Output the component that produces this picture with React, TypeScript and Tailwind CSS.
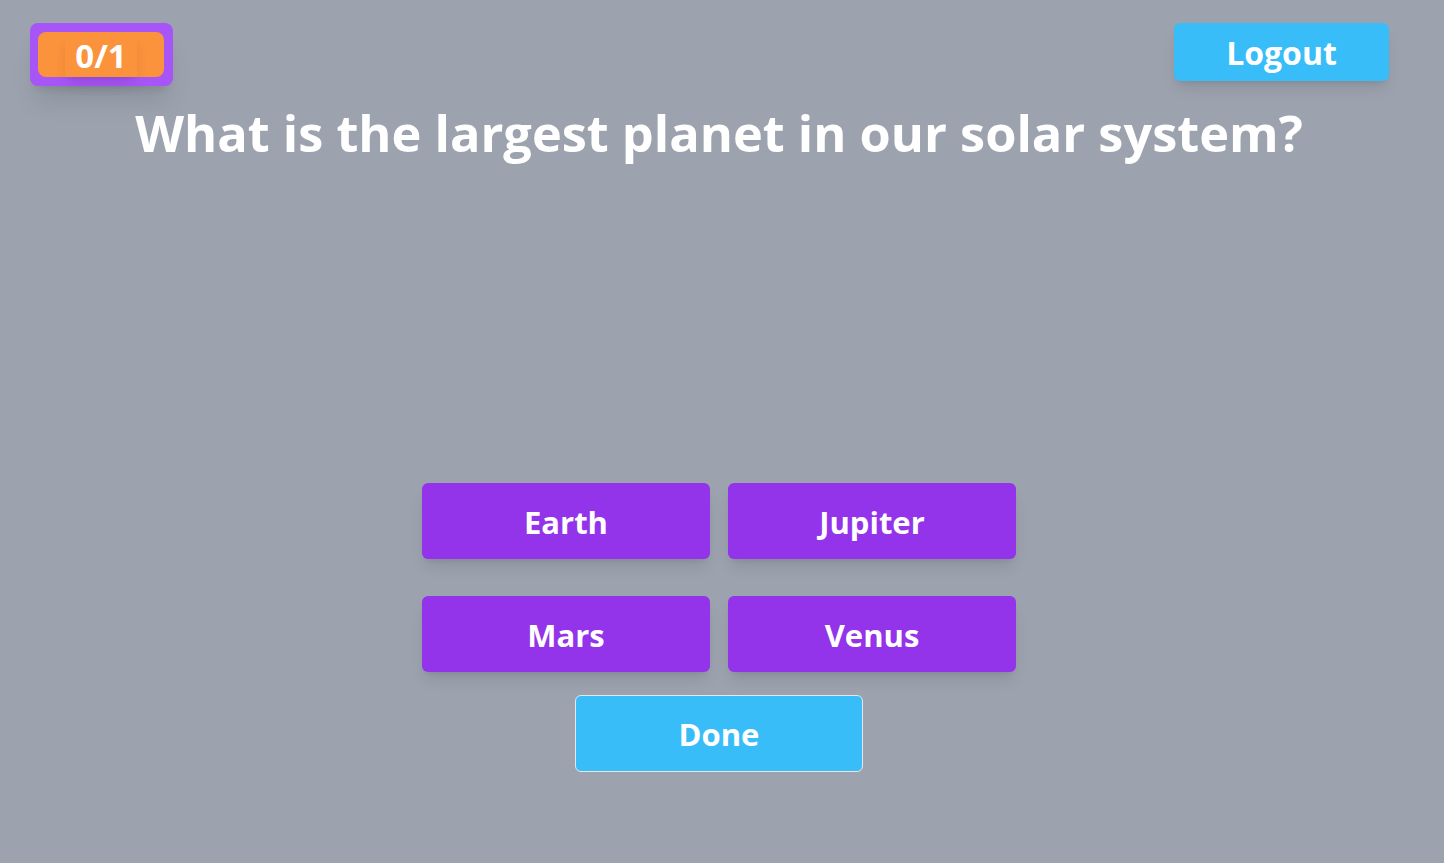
export default function App() {
  const font = { fontFamily: '"Open Sans", "Noto Sans", sans-serif' };
  return (
    <div className="min-h-screen w-full bg-[#9ca3af] flex flex-col" style={font}>
      <div className="flex items-start justify-between pl-[30px] pr-[55px] pt-[23px]">
        <div className="rounded-lg bg-[#a855f7] pl-[8px] pr-[9px] py-[9px] shadow-xl">
          <div className="flex h-[45px] w-[126px] items-center justify-center rounded-lg bg-[#fb923c]">
            <span className="flex h-full w-[72px] items-center justify-center pt-[2px] text-[33px] font-bold text-white shadow-lg">0/1</span>
          </div>
        </div>
        <button className="flex h-[58px] w-[215px] items-center justify-center rounded-md bg-[#38bdf8] pt-[2px] text-[32px] font-bold text-white shadow-lg">
          Logout
        </button>
      </div>
      <div className="pr-[6px]">
        <h1 className="mt-[17px] text-center text-[50.5px] font-bold leading-[60px] text-white">
          What is the largest planet in our solar system?
        </h1>
        <div className="mt-[320px] flex flex-col items-center">
          <div className="grid grid-cols-2 gap-x-[18px] gap-y-[37px]">
            {['Earth', 'Jupiter', 'Mars', 'Venus'].map((a) => (
              <button
                key={a}
                className="flex h-[76px] w-[288px] items-center justify-center rounded-md bg-[#9333ea] pt-[2px] text-[31px] font-bold text-white shadow-lg"
              >
                {a}
              </button>
            ))}
          </div>
          <button className="mt-[23px] flex h-[77px] w-[288px] items-center justify-center rounded-md border border-[#e5e7eb] bg-[#38bdf8] pt-[2px] text-[31px] font-bold text-white">
            Done
          </button>
        </div>
      </div>
    </div>
  );
}
